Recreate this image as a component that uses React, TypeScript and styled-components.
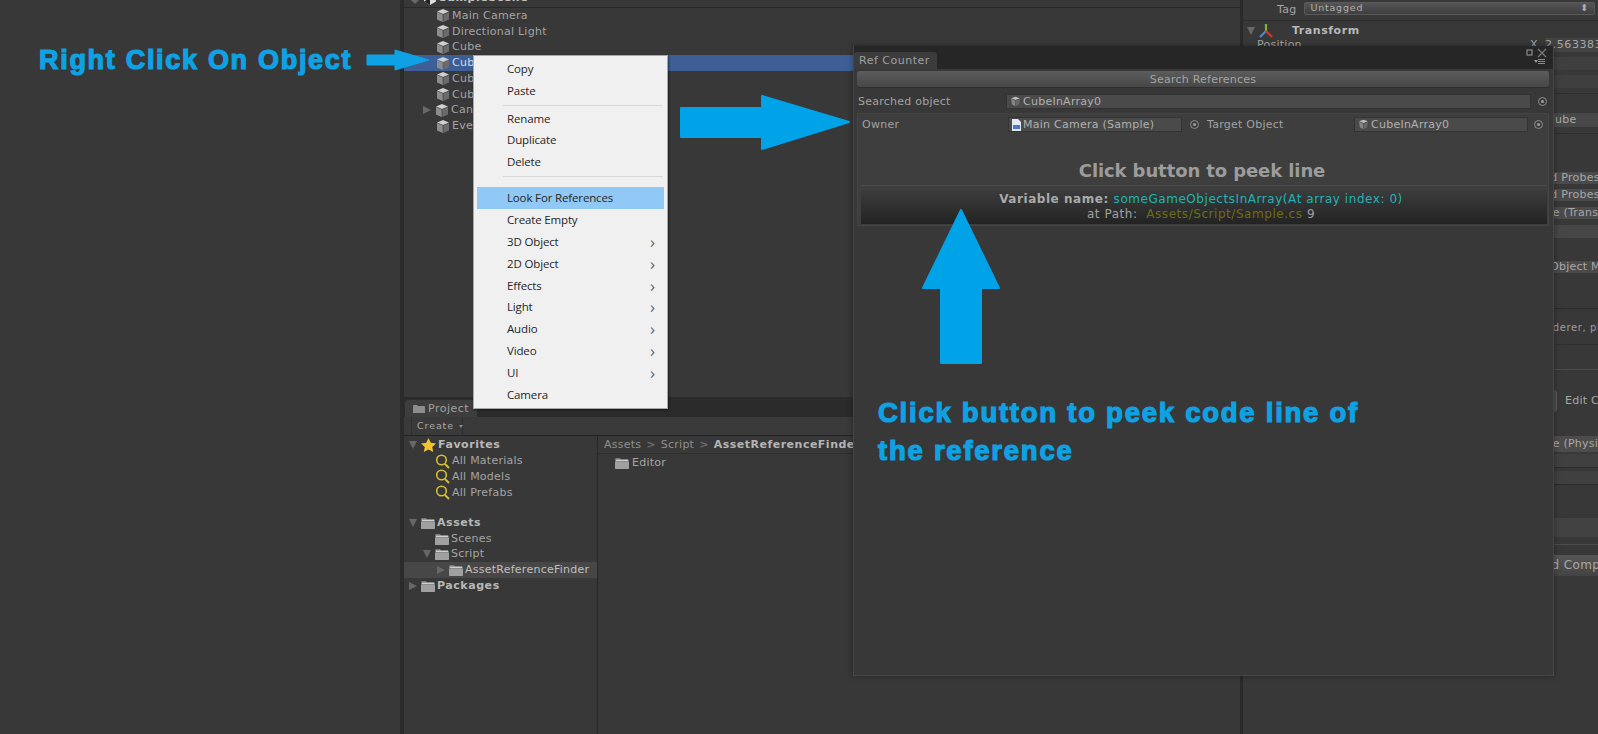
import React from "react";
import styled, { createGlobalStyle } from "styled-components";

const Global = createGlobalStyle`
  html, body { margin: 0; padding: 0; background: #383838; }
  body { width: 1598px; height: 734px; overflow: hidden; }
  #root { width: 1598px; height: 734px; }
  * { box-sizing: border-box; }
`;

const UI = `"DejaVu Sans", "Liberation Sans", sans-serif`;

const Page = styled.div`
  position: relative;
  width: 1598px;
  height: 734px;
  overflow: hidden;
  display: flex;
  background: #383838;
  color: #a6a6a6;
  font: 11px/16px ${UI};
  letter-spacing: 0.25px;
  white-space: nowrap;
`;
const Gutter = styled.div`
  width: 400px;
  flex: none;
  padding: 44px 0 0 39px;
`;
const Rule = styled.div`
  width: 4px;
  flex: none;
  background: #2b2b2b;
`;
const InspectorRule = styled.div`
  width: 3px;
  flex: none;
  background: #2a2a2a;
`;
const Center = styled.div`
  width: 836px;
  flex: none;
  display: flex;
  flex-direction: column;
`;
const Hierarchy = styled.div`
  height: 397px;
  flex: none;
`;
const SceneHeader = styled.div`
  height: 8px;
  overflow: hidden;
  display: flex;
  gap: 2px;
  border-bottom: 1px solid #292929;
  padding-left: 7px;
  color: #c4c4c4;
  font-weight: 700;
  letter-spacing: 0.55px;
  align-items: flex-start;
`;
const HeaderCaret = styled.span`
  width: 0;
  height: 0;
  border-left: 4.5px solid transparent;
  border-right: 4.5px solid transparent;
  border-top: 4px solid #676767;
  margin-right: 2px;
`;
const Tree = styled.div`
  display: flex;
  flex-direction: column;
`;
const TreeRow = styled.div<{ $indent: number; $selected?: boolean; $active?: boolean; $bold?: boolean }>`
  height: 15.75px;
  flex: none;
  display: flex;
  align-items: center;
  gap: 2px;
  padding-left: ${(p) => p.$indent}px;
  background: ${(p) => (p.$selected ? "#3e5f96" : p.$active ? "#474747" : "transparent")};
  color: ${(p) => (p.$selected ? "#d5d9e4" : p.$active ? "#c0c0c0" : p.$bold ? "#b8b8b8" : "#a4a4a4")};
  font-weight: ${(p) => (p.$bold ? 700 : 400)};
  letter-spacing: ${(p) => (p.$bold ? "0.55px" : "inherit")};
`;
const Spacer = styled.div<{ $h: number }>`
  height: ${(p) => p.$h}px;
  flex: none;
`;
const Caret = styled.span<{ $open?: boolean }>`
  width: 0;
  height: 0;
  flex: none;
  margin-right: 2px;
  ${(p) =>
    p.$open
      ? `border-left: 4.5px solid transparent; border-right: 4.5px solid transparent; border-top: 8px solid #676767;`
      : `border-top: 4.5px solid transparent; border-bottom: 4.5px solid transparent; border-left: 8px solid #676767;`}
`;
const TabStrip = styled.div`
  height: 20px;
  flex: none;
  background: #2b2b2b;
  display: flex;
  align-items: flex-end;
  padding-left: 1px;
`;
const ProjectTab = styled.div`
  width: 72px;
  height: 17px;
  background: #3d3d3d;
  border-radius: 3px 3px 0 0;
  display: flex;
  align-items: center;
  gap: 3px;
  padding: 1px 0 0 8px;
  letter-spacing: 0.5px;
  color: #a0a0a0;
`;
const Toolbar = styled.div`
  height: 19px;
  flex: none;
  background: #3a3a3a;
  border-bottom: 1px solid #232323;
  padding-left: 7px;
  display: flex;
`;
const CreateButton = styled.div`
  width: 52px;
  height: 18px;
  border-left: 1px solid #2f2f2f;
  border-right: 1px solid #2f2f2f;
  display: flex;
  align-items: center;
  gap: 5px;
  padding-left: 5px;
  font-size: 9.5px;
  letter-spacing: 0.9px;
  color: #a8a8a8;
`;
const Chevron = styled.span`
  width: 0;
  height: 0;
  border-left: 2.5px solid transparent;
  border-right: 2.5px solid transparent;
  border-top: 3px solid #8a8a8a;
`;
const Browser = styled.div`
  flex: 1;
  display: flex;
`;
const FavoritesPane = styled.div`
  width: 193px;
  flex: none;
  display: flex;
  flex-direction: column;
  padding-top: 1.5px;
`;
const PaneRule = styled.div`
  width: 1px;
  flex: none;
  background: #272727;
`;
const AssetPane = styled.div`
  flex: 1;
  overflow: hidden;
  display: flex;
  flex-direction: column;
`;
const Breadcrumb = styled.div`
  height: 18px;
  border-bottom: 1px solid #2e2e2e;
  display: flex;
  align-items: center;
  gap: 5px;
  padding-left: 6px;
  color: #8f8f8f;
`;
const CrumbCurrent = styled.b`
  color: #b4b4b4;
  letter-spacing: 0.5px;
`;
const CrumbSep = styled.span`
  color: #6a6a6a;
  font-weight: 700;
`;
const AssetEntry = styled.div`
  margin: 1px 0 0 17px;
  height: 16px;
  display: flex;
  align-items: center;
  gap: 3px;
`;
const Inspector = styled.div`
  flex: 1;
  display: flex;
  flex-direction: column;
  overflow: hidden;
`;
const TagRow = styled.div`
  height: 21px;
  flex: none;
  border-bottom: 1px solid #2c2c2c;
  padding: 2px 3px 0 34px;
  display: flex;
  gap: 8px;
`;
const TagLabel = styled.span`
  line-height: 13px;
  margin-top: 1px;
`;
const TagSelect = styled.div`
  flex: 1;
  height: 13px;
  border: 1px solid #5a5a5a;
  border-radius: 2px;
  background: linear-gradient(#555, #3f3f3f);
  font-size: 9.5px;
  line-height: 10px;
  padding: 0 5px;
  display: flex;
  justify-content: space-between;
  letter-spacing: 0.8px;
  color: #b0b0b0;
`;
const ComponentHead = styled.div`
  height: 19px;
  flex: none;
  display: flex;
  align-items: center;
  padding-left: 4px;
  gap: 1px;
  color: #b8b8b8;
  font-weight: 700;
  letter-spacing: 0.55px;
`;
const ComponentName = styled.span`
  margin-left: 17px;
`;
const PositionRow = styled.div`
  height: 10px;
  flex: none;
  display: flex;
  align-items: center;
  padding-left: 14px;
`;
const PositionLabel = styled.span`
  width: 273px;
  flex: none;
`;
const AxisLabel = styled.span`
  width: 15px;
  flex: none;
`;
const PositionValue = styled.span`
  flex: 1;
  height: 14px;
  line-height: 14px;
  background: #434343;
  letter-spacing: 0.6px;
  overflow: hidden;
`;
const Strip = styled.div<{ $gap: number; $h: number; $tone?: string; $x?: number; $line?: boolean }>`
  margin-top: ${(p) => p.$gap}px;
  height: ${(p) => p.$h}px;
  flex: none;
  background: ${(p) => p.$tone ?? "transparent"};
  padding-left: ${(p) => p.$x ?? 0}px;
  line-height: ${(p) => p.$h}px;
  color: #a8a8a8;
  border-bottom: ${(p) => (p.$line ? "1px solid #2c2c2c" : "none")};
  overflow: hidden;
`;
const HelpStrip = styled(Strip)`
  font-size: 10px;
  letter-spacing: 0.6px;
  color: #9c9c9c;
`;
const EditButtonRow = styled.div`
  margin-top: 19px;
  height: 23px;
  flex: none;
  display: flex;
  align-items: center;
  gap: 8px;
`;
const EditButton = styled.div`
  width: 314px;
  flex: none;
  height: 22px;
  background: #4a4a4a;
  border-radius: 3px;
  border-right: 1px solid #5a5a5a;
`;
const AddButton = styled.div`
  margin-top: 10px;
  height: 21px;
  flex: none;
  background: linear-gradient(#565656, #434343);
  padding-left: 292px;
  line-height: 21px;
  font-size: 12px;
  letter-spacing: 0.4px;
  color: #a8a8a8;
`;

/* Context menu */
const Menu = styled.div`
  position: absolute;
  left: 473px;
  top: 55px;
  width: 195px;
  height: 354px;
  background: #f0f0f0;
  border: 1px solid #a8a8a8;
  box-shadow: 1px 1px 2px rgba(0, 0, 0, 0.45);
  padding: 2px 3px;
  font: 11.5px/21.8px "Open Sans", "Noto Sans", sans-serif;
  letter-spacing: -0.15px;
  color: #262626;
  display: flex;
  flex-direction: column;
`;
const MenuItem = styled.div<{ $hot?: boolean }>`
  height: 21.8px;
  flex: none;
  padding: 0 9px 0 30px;
  display: flex;
  justify-content: space-between;
  align-items: center;
  background: ${(p) => (p.$hot ? "#90c8f6" : "transparent")};
`;
const MenuChevron = styled.span`
  font-size: 17px;
  line-height: 18px;
  color: #666;
`;
const MenuSep = styled.div<{ $h: number }>`
  height: ${(p) => p.$h}px;
  flex: none;
  margin: 0 1px 0 26px;
  &::after {
    content: "";
    display: block;
    height: 1px;
    background: #d8d8d8;
    margin-top: 3px;
  }
`;

/* Floating window */
const Win = styled.div`
  position: absolute;
  left: 853px;
  top: 46px;
  width: 701px;
  height: 630px;
  background: #383838;
  border: 1px solid #454545;
  border-top: none;
  box-shadow: 0 0 6px rgba(0, 0, 0, 0.35);
  display: flex;
  flex-direction: column;
`;
const WinStrip = styled.div`
  position: relative;
  height: 23px;
  flex: none;
  background: #262626;
  display: flex;
  align-items: flex-end;
`;
const WinTab = styled.div`
  width: 83px;
  height: 17px;
  background: #3c3c3c;
  border-radius: 3px 3px 0 0;
  padding-left: 5px;
  line-height: 17px;
  letter-spacing: 0.5px;
  color: #a0a0a0;
`;
const WinControls = styled.div`
  position: absolute;
  right: 1px;
  top: 1px;
  width: 26px;
  height: 20px;
`;
const WinBody = styled.div`
  flex: 1;
  padding: 2px 4px 0 3px;
  display: flex;
  flex-direction: column;
`;
const SearchButton = styled.div`
  height: 17px;
  flex: none;
  border-radius: 3px;
  background: linear-gradient(#5c5c5c, #474747);
  border-bottom: 1px solid #2e2e2e;
  text-align: center;
  line-height: 18px;
  color: #a4a4a4;
`;
const FieldRow = styled.div<{ $inset?: boolean }>`
  display: flex;
  align-items: center;
  height: 15px;
  flex: none;
  margin-top: ${(p) => (p.$inset ? 1 : 6)}px;
  padding-right: ${(p) => (p.$inset ? 0 : 2)}px;
`;
const FieldLabel = styled.span<{ $w: number; $pad?: number }>`
  width: ${(p) => p.$w}px;
  flex: none;
  padding-left: ${(p) => p.$pad ?? 1}px;
  color: #a2a2a2;
`;
const ObjectField = styled.div<{ $w?: number }>`
  width: ${(p) => (p.$w ? `${p.$w}px` : "auto")};
  flex: ${(p) => (p.$w ? "none" : 1)};
  height: 15px;
  background: #4a4a4a;
  border: 1px solid #333;
  display: flex;
  align-items: center;
  gap: 2px;
  padding-left: 3px;
  line-height: 13px;
  color: #b0b0b0;
  overflow: hidden;
`;
const Picker = styled.span<{ $m: number }>`
  width: 9px;
  height: 9px;
  flex: none;
  margin-left: ${(p) => p.$m}px;
  border-radius: 50%;
  border: 1px solid #8e8e8e;
  display: flex;
  align-items: center;
  justify-content: center;
  &::after {
    content: "";
    width: 3px;
    height: 3px;
    border-radius: 50%;
    background: #a0a0a0;
  }
`;
const ResultBox = styled.div`
  margin-top: 4px;
  height: 113px;
  flex: none;
  background: #3e3e3e;
  border: 1px solid #444;
  padding: 2px 1px 0 3px;
  display: flex;
  flex-direction: column;
`;
const Peek = styled.div`
  margin-top: 27px;
  height: 23px;
  flex: none;
  text-align: center;
  font-size: 18px;
  line-height: 23px;
  font-weight: 700;
  letter-spacing: -0.1px;
  color: #9c9c9c;
  padding-right: 4px;
`;
const CodeButton = styled.div`
  margin: 3px 0 0 0;
  height: 39px;
  flex: none;
  background: linear-gradient(#3f3f3f, #232323);
  border-top: 1px solid #4c4c4c;
  text-align: center;
  padding: 6px 6px 0 0;
  font-size: 12px;
  line-height: 15px;
  letter-spacing: 0.55px;
  color: #a0a0a0;
`;
const CodeLine = styled.div``;
const VarLabel = styled.b`
  color: #aaa;
`;
const VarName = styled.span`
  color: #1fb4b4;
`;
const PathName = styled.span`
  color: #6c6c12;
`;

/* Annotations */
const blue = "#0ea2e4";
const Callout = styled.div`
  font: 700 27px/32px "Liberation Sans", Arial, sans-serif;
  letter-spacing: 1.7px;
  color: ${blue};
  -webkit-text-stroke: 1.2px ${blue};
`;
const PeekCallout = styled(Callout)`
  position: absolute;
  left: 878px;
  top: 394px;
  font-size: 27.5px;
  line-height: 38px;
  letter-spacing: 1.75px;
`;
const SmallArrow = styled.svg`
  position: absolute;
  left: 366px;
  top: 49px;
`;
const RightArrow = styled.svg`
  position: absolute;
  left: 679px;
  top: 94px;
`;
const UpArrow = styled.svg`
  position: absolute;
  left: 921px;
  top: 208px;
`;

const Cube = () => (
  <svg width="14" height="15" viewBox="0 0 14 15">
    <path d="M7 1 13 3.5 7 6 1 3.5Z" fill="#cfcfcf" />
    <path d="M1 4 6.7 6.4V14L1 11.4Z" fill="#8d8d8d" />
    <path d="M13 4 7.3 6.4V14L13 11.4Z" fill="#6b6b6b" />
  </svg>
);
const TinyCube = () => (
  <svg width="11" height="11" viewBox="0 0 14 15">
    <path d="M1 3 7 1 13 3 7 5.5Z" fill="#bdbdbd" />
    <path d="M1 4 6.7 6.4V14L2 11.4Z" fill="#858585" />
    <path d="M13 4 7.3 6.4V14L12 11.4Z" fill="#696969" />
  </svg>
);
const Folder = () => (
  <svg width="14" height="12" viewBox="0 0 14 12">
    <path d="M0 2.5Q0 1 1 1H5L6 2.5H13Q14 2.5 14 3.5V11Q14 12 13 12H1Q0 12 0 11Z" fill="#7a7a7a" />
    <path d="M0 5H14V11Q14 12 13 12H1Q0 12 0 11Z" fill="#a0a0a0" />
    <path d="M1 2.6H13V4.2H1Z" fill="#d0d0d0" />
  </svg>
);
const TabFolder = () => (
  <svg width="12" height="10" viewBox="0 0 12 10">
    <path d="M0 2Q0 1 1 1H4L5 2H11Q12 2 12 3V9H0Z" fill="#8c8c8c" />
  </svg>
);
const Star = () => (
  <svg width="15" height="14" viewBox="0 0 15 14">
    <path d="M7.5 0 9.8 4.8 15 5.4 11.2 9 12.2 14 7.5 11.5 2.8 14 3.8 9 0 5.4 5.2 4.8Z" fill="#f4c430" />
  </svg>
);
const Lens = () => (
  <svg width="15" height="15" viewBox="0 0 15 15" fill="none" stroke="#d8bf2e" strokeWidth="1.6">
    <circle cx="6.5" cy="6" r="4.8" />
    <path d="M10 10 14 14" strokeWidth="2" />
  </svg>
);
const ScriptDoc = () => (
  <svg width="9" height="12" viewBox="0 0 9 12">
    <path d="M0 0H6L9 3V12H0Z" fill="#e4e8f0" />
    <rect x="1" y="6" width="7" height="4" fill="#4a78c8" />
  </svg>
);
const TransformGizmo = () => (
  <svg width="16" height="16" viewBox="0 0 16 16" fill="none" strokeWidth="2.2">
    <path d="M8 8V1" stroke="#7fb23a" />
    <path d="M8 8 2 14" stroke="#3f8fd8" />
    <path d="M8 8 14 14" stroke="#c83a2e" />
  </svg>
);
const UnityMark = () => (
  <svg width="14" height="14" viewBox="0 0 14 14" style={{ marginTop: -9 }}>
    <path d="M7 0 13 3.5V10.5L7 14 1 10.5V3.5Z" fill="#dcdcdc" />
    <path d="M7 7 1 10.5 7 14Z" fill="#222" />
  </svg>
);
const HeaderText = styled.span`
  margin-top: -10px;
  line-height: 15px;
`;

const hierarchy = [
  { t: "Main Camera" },
  { t: "Directional Light" },
  { t: "Cube" },
  { t: "CubeInArray0", sel: true },
  { t: "CubeInArray1" },
  { t: "CubeInArray2" },
  { t: "Canvas", caret: true },
  { t: "EventSystem" },
];

const menuGroups: { t: string; sub?: boolean; hot?: boolean }[][] = [
  [{ t: "Copy" }, { t: "Paste" }],
  [{ t: "Rename" }, { t: "Duplicate" }, { t: "Delete" }],
  [
    { t: "Look For References", hot: true },
    { t: "Create Empty" },
    { t: "3D Object", sub: true },
    { t: "2D Object", sub: true },
    { t: "Effects", sub: true },
    { t: "Light", sub: true },
    { t: "Audio", sub: true },
    { t: "Video", sub: true },
    { t: "UI", sub: true },
    { t: "Camera" },
  ],
];

export default function App() {
  return (
    <Page>
      <Global />
      <Gutter>
        <Callout>Right Click On Object</Callout>
      </Gutter>
      <Rule />
      <Center>
        <Hierarchy>
          <SceneHeader>
            <HeaderCaret />
            <UnityMark />
            <HeaderText>SampleScene</HeaderText>
          </SceneHeader>
          <Tree>
            {hierarchy.map((r) => (
              <TreeRow key={r.t} $indent={r.caret ? 19 : 32} $selected={r.sel}>
                {r.caret && <Caret />}
                <Cube />
                {r.t}
              </TreeRow>
            ))}
          </Tree>
        </Hierarchy>
        <TabStrip>
          <ProjectTab>
            <TabFolder />
            Project
          </ProjectTab>
        </TabStrip>
        <Toolbar>
          <CreateButton>
            Create
            <Chevron />
          </CreateButton>
        </Toolbar>
        <Browser>
          <FavoritesPane>
            <TreeRow $indent={5} $bold>
              <Caret $open />
              <Star />
              Favorites
            </TreeRow>
            <TreeRow $indent={31}><Lens />All Materials</TreeRow>
            <TreeRow $indent={31}><Lens />All Models</TreeRow>
            <TreeRow $indent={31}><Lens />All Prefabs</TreeRow>
            <Spacer $h={14.6} />
            <TreeRow $indent={5} $bold>
              <Caret $open />
              <Folder />
              Assets
            </TreeRow>
            <TreeRow $indent={31}><Folder />Scenes</TreeRow>
            <TreeRow $indent={19}><Caret $open /><Folder />Script</TreeRow>
            <TreeRow $indent={33} $active><Caret /><Folder />AssetReferenceFinder</TreeRow>
            <TreeRow $indent={5} $bold>
              <Caret />
              <Folder />
              Packages
            </TreeRow>
          </FavoritesPane>
          <PaneRule />
          <AssetPane>
            <Breadcrumb>
              Assets <CrumbSep>&gt;</CrumbSep> Script <CrumbSep>&gt;</CrumbSep>
              <CrumbCurrent>AssetReferenceFinder</CrumbCurrent>
            </Breadcrumb>
            <AssetEntry>
              <Folder />
              Editor
            </AssetEntry>
          </AssetPane>
        </Browser>
      </Center>
      <InspectorRule />
      <Inspector>
        <TagRow>
          <TagLabel>Tag</TagLabel>
          <TagSelect>
            Untagged<span>⬍</span>
          </TagSelect>
        </TagRow>
        <ComponentHead>
          <Caret $open />
          <TransformGizmo />
          <ComponentName>Transform</ComponentName>
        </ComponentHead>
        <PositionRow>
          <PositionLabel>Position</PositionLabel>
          <AxisLabel>X</AxisLabel>
          <PositionValue>2.563383</PositionValue>
        </PositionRow>
        <Strip $gap={7} $h={13} $tone="#3f3f3f" />
        <Strip $gap={5} $h={13} $tone="#3f3f3f" />
        <Strip $gap={5} $h={1} $tone="#2e2e2e" />
        <Strip $gap={19} $h={14} $tone="#484848" $x={304}>Cube</Strip>
        <Strip $gap={6} $h={1} $tone="#2e2e2e" />
        <Strip $gap={38} $h={12} $tone="#4a4a4a" $x={282}>Blend Probes</Strip>
        <Strip $gap={5} $h={12} $tone="#4a4a4a" $x={282}>Blend Probes</Strip>
        <Strip $gap={6} $h={12} $tone="#4a4a4a" $x={287}>None (Transform)</Strip>
        <Strip $gap={6} $h={13} $tone="#464646" />
        <Strip $gap={23} $h={12} $tone="#4a4a4a" $x={285}>Per Object Motion</Strip>
        <Strip $gap={35} $h={1} $tone="#2c2c2c" />
        <HelpStrip $gap={12} $h={14} $x={289}>Renderer, please</HelpStrip>
        <Strip $gap={9} $h={1} $tone="#2e2e2e" />
        <Strip $gap={24} $h={1} $tone="#4c4c4c" />
        <EditButtonRow>
          <EditButton />
          Edit Collider
        </EditButtonRow>
        <Strip $gap={24} $h={16} $tone="#4c4c4c" $x={287}>None (Physic Material)</Strip>
        <Strip $gap={2} $h={14} $tone="#404040" $line />
        <Strip $gap={3} $h={14} $tone="#404040" $line />
        <Strip $gap={33} $h={19} $tone="#424242" />
        <Strip $gap={7} $h={1} $tone="#4c4c4c" />
        <AddButton>Add Component</AddButton>
      </Inspector>

      <Menu>
        {menuGroups.map((g, i) => (
          <React.Fragment key={i}>
            {i > 0 && <MenuSep $h={i === 1 ? 6 : 14.5} />}
            {g.map((m) => (
              <MenuItem key={m.t} $hot={m.hot}>
                {m.t}
                {m.sub && <MenuChevron>›</MenuChevron>}
              </MenuItem>
            ))}
          </React.Fragment>
        ))}
      </Menu>

      <Win>
        <WinStrip>
          <WinTab>Ref Counter</WinTab>
          <WinControls>
            <svg width="26" height="20" viewBox="0 0 26 20" fill="none">
              <rect x="1" y="3" width="5" height="5" stroke="#8a8a8a" strokeWidth="1.2" />
              <path d="M12 2 20 10M20 2 12 10" stroke="#7a7a7a" strokeWidth="1.2" />
              <path d="M8 13H12L10 16Z" fill="#9a9a9a" />
              <path d="M12 12.5H19M12 14.5H19M12 16.5H19" stroke="#8a8a8a" />
            </svg>
          </WinControls>
        </WinStrip>
        <WinBody>
          <SearchButton>Search References</SearchButton>
          <FieldRow>
            <FieldLabel $w={149}>Searched object</FieldLabel>
            <ObjectField>
              <TinyCube />
              CubeInArray0
            </ObjectField>
            <Picker $m={7} />
          </FieldRow>
          <ResultBox>
            <FieldRow $inset>
              <FieldLabel $w={147}>Owner</FieldLabel>
              <ObjectField $w={174}>
                <ScriptDoc />
                Main Camera (Sample)
              </ObjectField>
              <Picker $m={8} />
              <FieldLabel $w={155} $pad={8}>Target Object</FieldLabel>
              <ObjectField $w={174}>
                <TinyCube />
                CubeInArray0
              </ObjectField>
              <Picker $m={6} />
            </FieldRow>
            <Peek>Click button to peek line</Peek>
            <CodeButton>
              <CodeLine>
                <VarLabel>Variable name: </VarLabel>
                <VarName>someGameObjectsInArray(At array index: 0)</VarName>
              </CodeLine>
              <CodeLine>
                at Path:&nbsp; <PathName>Assets/Script/Sample.cs</PathName> 9
              </CodeLine>
            </CodeButton>
          </ResultBox>
        </WinBody>
      </Win>

      <SmallArrow width="64" height="22" viewBox="0 0 64 22">
        <path d="M1 6H29V1L63 11 29 21V16H1Z" fill={blue} stroke={blue} strokeLinejoin="round" />
      </SmallArrow>
      <RightArrow width="172" height="57" viewBox="0 0 172 57">
        <path d="M2 14H83V2L170 28 83 55V43H2Z" fill="#00a2e8" stroke="#00a2e8" strokeWidth="2" strokeLinejoin="round" />
      </RightArrow>
      <UpArrow width="80" height="158" viewBox="0 0 80 158">
        <path d="M40 2 78 80H60V155H20V80H2Z" fill="#00a2e8" stroke="#00a2e8" strokeWidth="2" strokeLinejoin="round" />
      </UpArrow>
      <PeekCallout>
        Click button to peek code line of
        <br />
        the reference
      </PeekCallout>
    </Page>
  );
}
